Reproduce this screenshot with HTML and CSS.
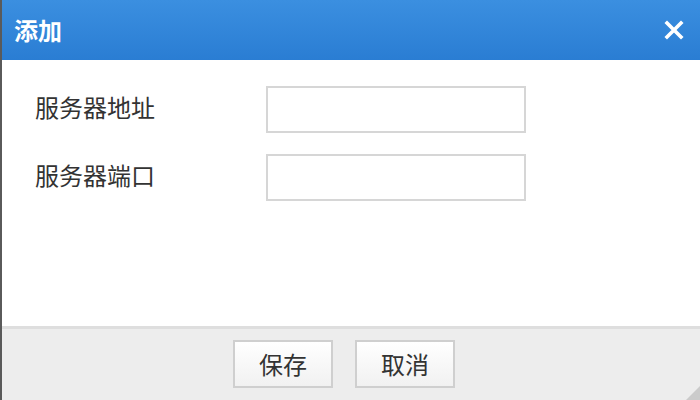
FILE: index.html
```html
<!DOCTYPE html>
<html>
<head>
<meta charset="utf-8">
<link rel="stylesheet" href="styles.css">
</head>
<body>
<div class="dialog">
  <div class="header">
    <span class="title">添加</span>
    <svg class="close" width="20" height="20" viewBox="0 0 20 20"><path d="M3 3L17 17M17 3L3 17" stroke="#fff" stroke-width="3.6" stroke-linecap="square"/></svg>
  </div>
  <div class="body">
    <div class="row"><label class="label">服务器地址</label><input class="field" type="text"></div>
    <div class="row"><label class="label">服务器端口</label><input class="field" type="text"></div>
  </div>
  <div class="footer">
    <button class="btn">保存</button>
    <button class="btn">取消</button>
    <svg class="grip" width="14" height="14" viewBox="0 0 14 14"><path d="M14 0L14 14L0 14Z" fill="#b5b5b5"/></svg>
  </div>
</div>
</body>
</html>
```
FILE: styles.css
```css
html, body { margin: 0; padding: 0; }
body { width: 700px; height: 400px; overflow: hidden; font-family: "Noto Sans CJK SC", "Liberation Sans", sans-serif; background: #fff; }
.dialog { width: 700px; height: 400px; display: flex; flex-direction: column; border-left: 2px solid #5a5a5a; box-sizing: border-box; position: relative; }
.header { height: 60px; flex: none; background: linear-gradient(#3b8fe0, #2a7dd3); display: flex; align-items: center; justify-content: space-between; padding: 0 16px 0 12px; }
.title { color: #fff; font-size: 24px; font-weight: bold; line-height: 1; }
.close { display: block; }
.body { flex: 1; padding: 26px 0 0 33px; display: flex; flex-direction: column; gap: 21px; }
.row { display: flex; align-items: center; }
.label { width: 231px; font-size: 24px; line-height: 1; color: #333; padding-bottom: 5px; }
.field { width: 260px; height: 47px; box-sizing: border-box; border: 2px solid #d6d6d6; margin: 0; padding: 0 6px; background: #fff; outline: none; }
.footer { height: 74px; flex: none; background: #ededed; border-top: 3px solid #dedede; display: flex; justify-content: flex-start; align-items: flex-start; gap: 22px; padding: 11px 0 0 231px; box-sizing: border-box; position: relative; }
.btn { width: 100px; height: 48px; border: 2px solid #cfcfcf; background: linear-gradient(#ffffff, #f1f1f1); font-family: "Noto Sans CJK SC", sans-serif; font-size: 24px; line-height: 1; color: #333; padding: 0; margin: 0; }
.grip { position: absolute; right: 0; bottom: 0; opacity: 0.6; }
```
